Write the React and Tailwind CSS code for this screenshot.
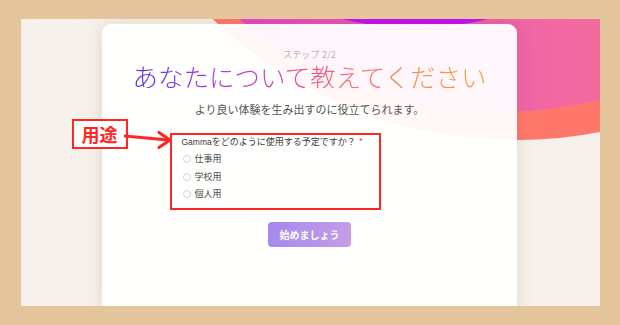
export default function App() {
  const jp = { fontFamily: '"Noto Sans CJK JP", "Noto Sans", sans-serif' };
  return (
    <div className="w-[620px] h-[325px] bg-[#e4c59c] pt-[19px] pb-[19px] pl-[21px] pr-[20px]" style={jp}>
      <div className="relative w-full h-full bg-[#f6f1ea] overflow-hidden flex justify-center">
        <svg className="absolute left-0 top-0" width="579" height="287" viewBox="0 0 579 287">
          <defs>
            <linearGradient id="pk" gradientUnits="userSpaceOnUse" x1="220" y1="0" x2="560" y2="0">
              <stop offset="0" stopColor="#e446ca" />
              <stop offset="0.6" stopColor="#ee5cae" />
              <stop offset="1" stopColor="#f26ba0" />
            </linearGradient>
          </defs>
          <circle cx="495" cy="-320" r="441" fill="#ff776b" />
          <circle cx="479" cy="-320" r="413" fill="url(#pk)" />
          <circle cx="394" cy="-291" r="300" fill="#c50ff0" />
        </svg>
        <div className="relative mt-[5px] ml-[-2px] w-[415px] h-[290px] rounded-t-[9px] bg-white/[0.95] shadow-[0_0_18px_rgba(110,80,50,0.16)] flex flex-col items-center pt-[25px]">
          <div className="text-[9px] leading-[12px] text-[#b3b3b3] tracking-[0.02em]">ステップ 2/2</div>
          <div className="mt-[3px] text-[25.5px] leading-[24px] font-light bg-[linear-gradient(90deg,#5a2fe6_0%,#a23be0_22%,#d443b8_38%,#f2508c_50%,#f77468_64%,#f78c4e_78%,#f5a04a_100%)] bg-clip-text text-transparent">
            あなたについて教えてください
          </div>
          <div className="mt-[13px] text-[11px] leading-[16px] text-[#555555]">
            より良い体験を生み出すのに役立てられます。
          </div>
          <div className="mt-[16px] w-[280px]">
            <div className="relative w-[211px] h-[77px] border-2 border-[#ff2626] pl-[10px]">
              <div className="absolute left-[-100px] top-[-16px] w-[56px] h-[30px] border-2 border-[#ff2626] bg-white flex items-center justify-center text-[18px] leading-none font-bold text-[#ff2626]">
                用途
              </div>
              <svg className="absolute left-[-48px] top-[-7px]" width="50" height="24" viewBox="0 0 50 24">
                <path d="M1 8 L44 12" stroke="#ff2626" strokeWidth="3.2" strokeLinecap="round" fill="none" />
                <path d="M35 4.5 L46 12 L35 19.5" stroke="#ff2626" strokeWidth="3.2" strokeLinecap="round" strokeLinejoin="round" fill="none" />
              </svg>
              <div className="text-[9px] leading-[13px] text-[#3a3a3a]">
                <span className="text-[8.5px]" style={{ fontFamily: '"Liberation Sans", sans-serif' }}>Gamma</span>をどのように使用する予定ですか？<span className="text-[#f04040] ml-[3px]">*</span>
              </div>
              <div className="mt-[1.25px] flex flex-col">
                {["仕事用", "学校用", "個人用"].map((t) => (
                  <div key={t} className="h-[17.5px] flex items-center">
                    <span className="w-[8px] h-[8px] rounded-full border border-[#d2d2d2] ml-[1px] bg-white" />
                    <span className="ml-[4px] text-[9px] leading-[12px] text-[#4a4a4a]">{t}</span>
                  </div>
                ))}
              </div>
            </div>
          </div>
          <div className="mt-[12px] w-[83px] h-[25px] rounded-[4px] bg-[linear-gradient(90deg,#a58aea,#c59ce8)] flex items-center justify-center text-[10px] font-bold text-white">
            始めましょう
          </div>
        </div>
      </div>
    </div>
  );
}
